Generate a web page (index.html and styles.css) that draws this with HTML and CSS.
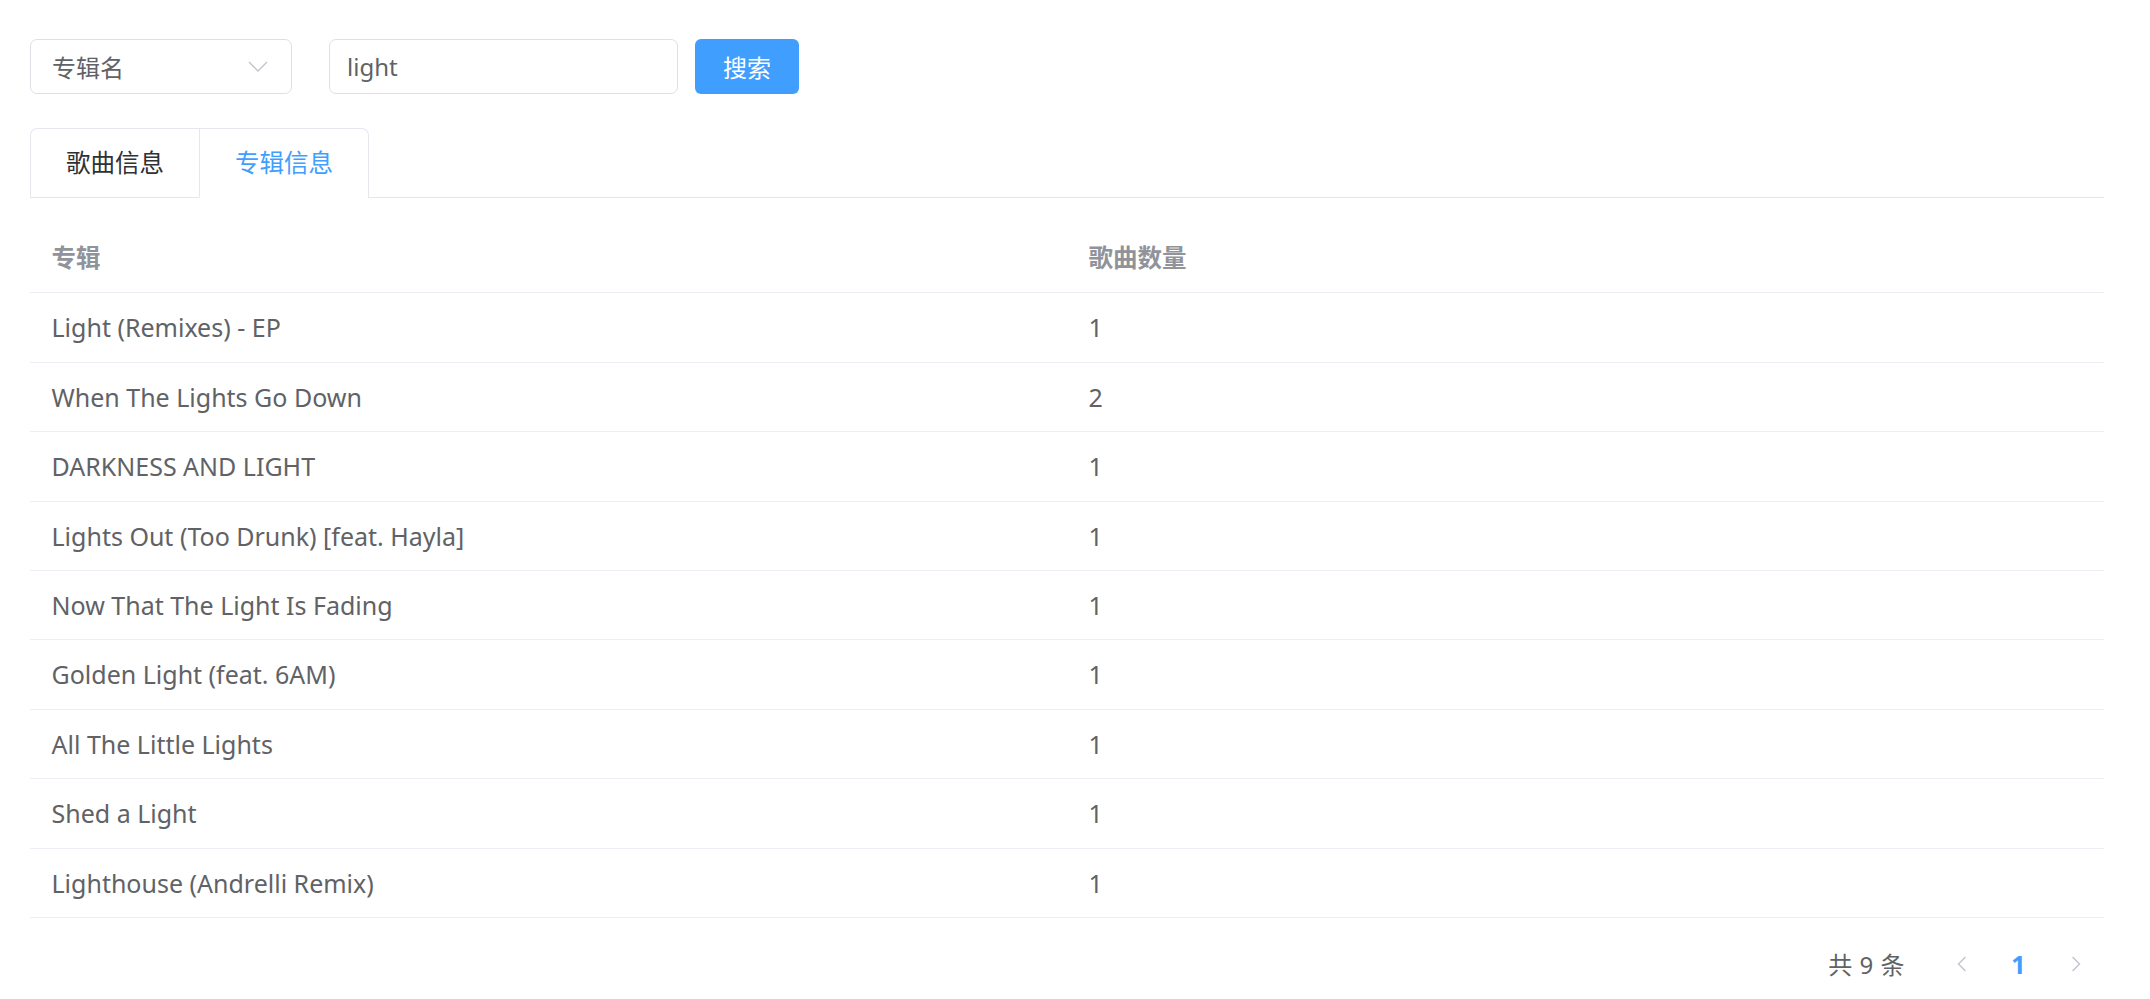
FILE: index.html
```html
<!DOCTYPE html>
<html lang="zh">
<head>
<meta charset="utf-8">
<title>专辑信息</title>
<link rel="stylesheet" href="styles.css">
</head>
<body>
<div class="page">
  <div class="toolbar">
    <div class="select">
      <span class="select-text">专辑名</span>
      <svg class="select-arrow" width="20" height="11" viewBox="0 0 20 11"><path d="M1 1 L10 10 L19 1" fill="none" stroke="#c0c4cc" stroke-width="1.4"/></svg>
    </div>
    <div class="input"><span class="input-text">light</span></div>
    <button class="btn-primary">搜索</button>
  </div>

  <div class="tabs-header">
    <div class="tabs-nav">
      <div class="tab">歌曲信息</div>
      <div class="tab is-active">专辑信息</div>
    </div>
  </div>

  <table class="table">
    <colgroup><col class="col-half"><col class="col-half"></colgroup>
    <thead>
      <tr><th>专辑</th><th>歌曲数量</th></tr>
    </thead>
    <tbody>
      <tr><td>Light (Remixes) - EP</td><td>1</td></tr>
      <tr><td>When The Lights Go Down</td><td>2</td></tr>
      <tr><td>DARKNESS AND LIGHT</td><td>1</td></tr>
      <tr><td>Lights Out (Too Drunk) [feat. Hayla]</td><td>1</td></tr>
      <tr><td>Now That The Light Is Fading</td><td>1</td></tr>
      <tr><td>Golden Light (feat. 6AM)</td><td>1</td></tr>
      <tr><td>All The Little Lights</td><td>1</td></tr>
      <tr><td>Shed a Light</td><td>1</td></tr>
      <tr><td>Lighthouse (Andrelli Remix)</td><td>1</td></tr>
    </tbody>
  </table>

  <div class="pagination">
    <span class="total">共 9 条</span>
    <span class="pg-btn">
      <svg width="10" height="16" viewBox="0 0 10 16"><path d="M8.5 1 L1.5 8 L8.5 15" fill="none" stroke="#c0c4cc" stroke-width="1.4"/></svg>
    </span>
    <span class="pg-btn pg-num is-active">1</span>
    <span class="pg-btn">
      <svg width="10" height="16" viewBox="0 0 10 16"><path d="M1.5 1 L8.5 8 L1.5 15" fill="none" stroke="#c0c4cc" stroke-width="1.4"/></svg>
    </span>
  </div>
</div>
</body>
</html>
```

FILE: styles.css
```css
html, body {
  margin: 0;
  padding: 0;
  background: #ffffff;
}

body {
  font-family: "Noto Sans", "Noto Sans CJK SC", sans-serif;
  color: #606266;
}

.page {
  padding: 39px 46px 0 30px;
}

.toolbar {
  display: flex;
  align-items: center;
}

.select {
  box-sizing: border-box;
  width: 262px;
  height: 55px;
  border: 1px solid #dcdfe6;
  border-radius: 7px;
  padding: 0 23px 0 21px;
  display: flex;
  align-items: center;
  justify-content: space-between;
}

.select-text,
.input-text {
  font-size: 24px;
  color: #606266;
}

.input {
  box-sizing: border-box;
  width: 349px;
  height: 55px;
  margin-left: 37px;
  border: 1px solid #dcdfe6;
  border-radius: 7px;
  padding: 0 17px;
  display: flex;
  align-items: center;
}

.btn-primary {
  box-sizing: border-box;
  margin-left: 17px;
  width: 104px;
  height: 55px;
  border: none;
  border-radius: 6px;
  background: #409eff;
  color: #ffffff;
  font-family: "Noto Sans", "Noto Sans CJK SC", sans-serif;
  font-size: 24px;
  padding: 0;
}

.tabs-header {
  margin-top: 34px;
  border-bottom: 1px solid #e4e7ed;
  display: flex;
}

.tabs-nav {
  display: flex;
  border: 1px solid #e4e7ed;
  border-bottom: none;
  border-radius: 7px 7px 0 0;
  margin-bottom: -1px;
}

.tab {
  height: 68px;
  line-height: 68px;
  padding: 0 35px;
  font-size: 24.5px;
  color: #303133;
  border-bottom: 1px solid transparent;
}

.tab + .tab {
  border-left: 1px solid #e4e7ed;
}

.tab.is-active {
  color: #409eff;
  border-bottom-color: #ffffff;
}

.table {
  width: 100%;
  margin-top: 26px;
  border-collapse: separate;
  border-spacing: 0;
  table-layout: fixed;
}

.col-half {
  width: 50%;
}

.table th,
.table td {
  text-align: left;
  padding: 14px 0 14px 21.5px;
  line-height: 40.4px;
  border-bottom: 1px solid #ebeef5;
  font-size: 24.5px;
  white-space: nowrap;
}

.table th {
  color: #909399;
  font-weight: bold;
}

.table td {
  color: #606266;
  font-size: 25px;
}

.pagination {
  margin-top: 21px;
  display: flex;
  justify-content: flex-end;
  align-items: center;
  height: 49px;
}

.total {
  font-size: 24px;
  letter-spacing: 0.5px;
  color: #606266;
  margin-right: 28px;
}

.pg-btn {
  width: 57px;
  height: 49px;
  display: flex;
  align-items: center;
  justify-content: center;
}

.pg-num {
  font-size: 25px;
  font-weight: bold;
  color: #303133;
}

.pg-num.is-active {
  color: #409eff;
}
```
